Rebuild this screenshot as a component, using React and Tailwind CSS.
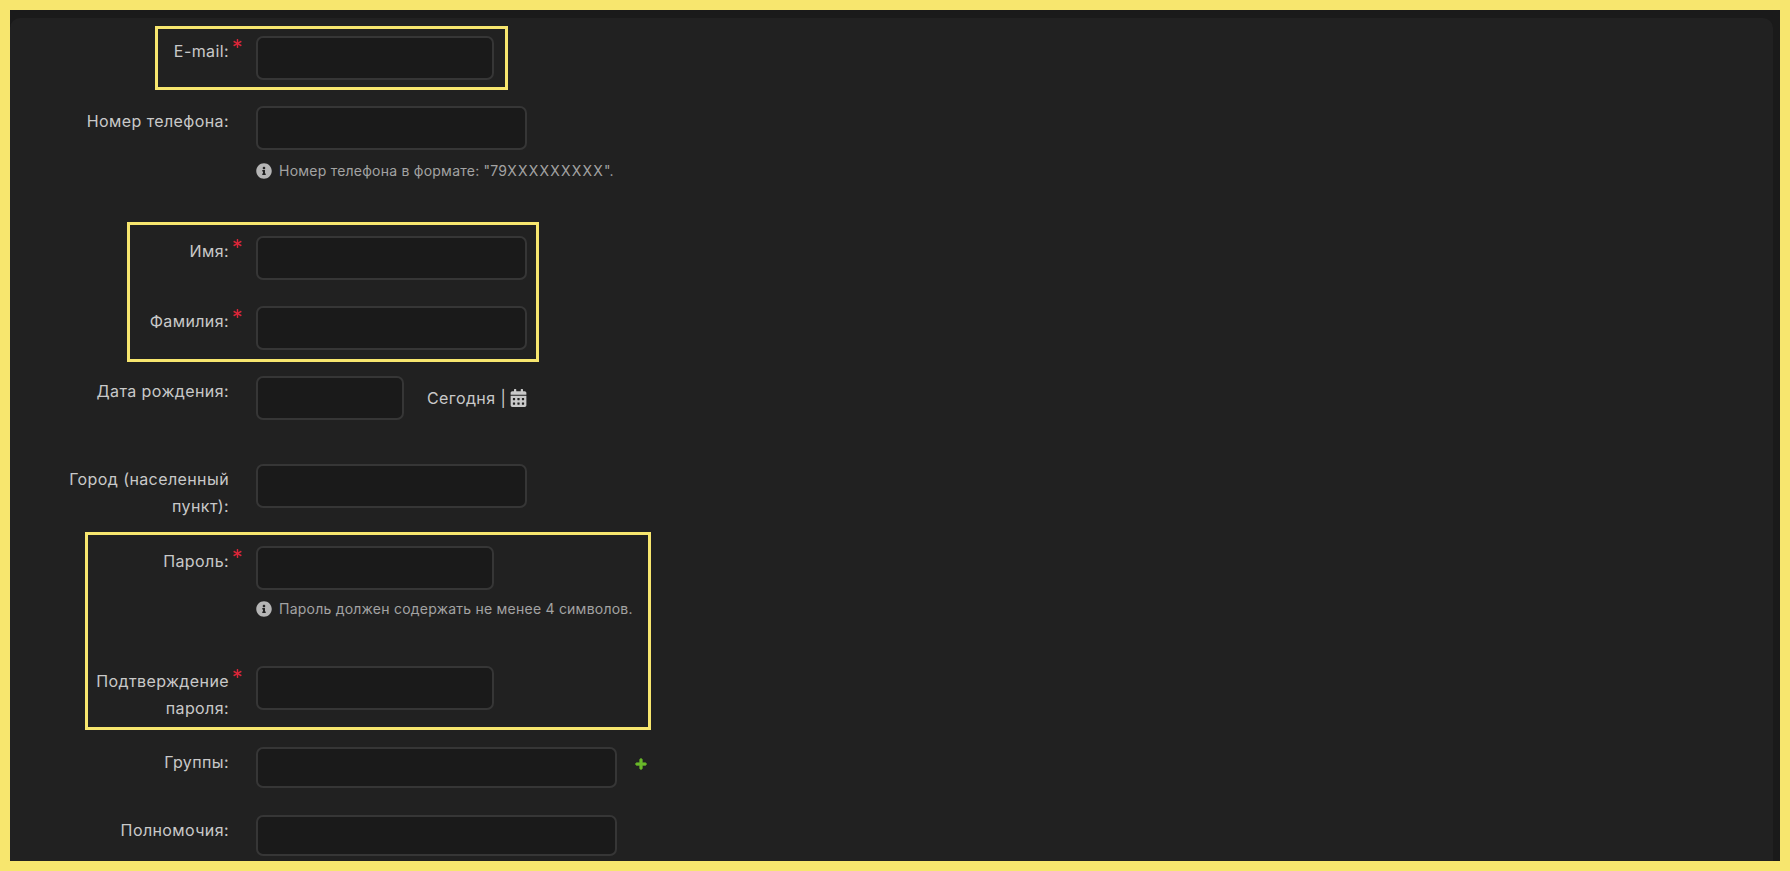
import React from 'react';
import { FaAsterisk, FaCalendarAlt, FaInfoCircle, FaPlus } from 'react-icons/fa';

const Hint = ({ children, className }) => (
  <div className={`flex items-center gap-[7px] text-[14px] leading-[18px] tracking-[0.23px] text-[#a3a3a3] ${className}`}>
    <FaInfoCircle className="w-[16px] h-[16px] text-[#b5b5b5]" />
    <span>{children}</span>
  </div>
);

// label column + field column, same for every row
const Row = ({ label, required, inputClass, after, hint, hintClass, className }) => (
  <div className={`flex items-start ${className}`}>
    <label className="relative w-[170px] pt-[2px] text-right text-[16px] leading-[27px] tracking-[0.4px] text-[#c9c9c9]">
      {label}
      {required && <FaAsterisk className="absolute right-[-13px] top-[3px] w-[9px] h-[9px] text-[#d92638]" />}
    </label>
    <div className="ml-[27px]">
      <div className="flex items-center">
        <input className={`rounded-[7px] border-2 border-[#363636] bg-[#1a1a1a] ${inputClass}`} />
        {after}
      </div>
      {hint && <Hint className={hintClass}>{hint}</Hint>}
    </div>
  </div>
);

export default function App() {
  return (
    <div className="h-[871px] w-[1790px] overflow-hidden border-[10px] border-[#f7e66e] bg-[#1a1a1a] pt-[8px] pr-[7px] font-['Inter',sans-serif]">
      <div className="h-[900px] rounded-[10px] bg-[#212121] pl-[49px] pt-[18px]">
        <div className="relative mb-[26px]">
          <Row label="E-mail:" required inputClass="h-[44px] w-[238px]" />
          <div className="absolute left-[96px] top-[-10px] h-[64px] w-[353px] border-[3px] border-[#f7e66e]" />
        </div>

        <Row
          label="Номер телефона:"
          inputClass="h-[44px] w-[271px]"
          hint={<>Номер телефона в формате: "79<span className="tracking-[1.2px]">XXXXXXXXX</span>".</>}
          hintClass="mt-[12px]"
          className="mb-[56px]"
        />

        <div className="relative mb-[26px]">
          <Row label="Имя:" required inputClass="h-[44px] w-[271px]" className="mb-[26px]" />
          <Row label="Фамилия:" required inputClass="h-[44px] w-[271px]" />
          <div className="absolute left-[68px] top-[-14px] h-[140px] w-[412px] border-[3px] border-[#f7e66e]" />
        </div>

        <Row
          label="Дата рождения:"
          inputClass="h-[44px] w-[148px]"
          className="mb-[44px]"
          after={
            <div className="ml-[23px] flex items-center text-[16px] tracking-[0.4px] text-[#c9c9c9]">
              <span>Сегодня |</span>
              <FaCalendarAlt className="ml-[4px] w-[17px] h-[18px]" />
            </div>
          }
        />

        <Row label="Город (населенный пункт):" inputClass="h-[44px] w-[271px]" className="mb-[26px]" />

        <div className="relative mb-[25px]">
          <Row
            label="Пароль:"
            required
            inputClass="h-[44px] w-[238px]"
            hint="Пароль должен содержать не менее 4 символов."
            hintClass="mt-[10px]"
            className="mb-[48px]"
          />
          <Row label="Подтверждение пароля:" required inputClass="h-[44px] w-[238px]" />
          <div className="absolute left-[26px] top-[-14px] h-[198px] w-[566px] border-[3px] border-[#f7e66e]" />
        </div>

        <Row
          label="Группы:"
          inputClass="h-[41px] w-[361px]"
          className="mb-[27px]"
          after={<FaPlus className="ml-[18px] mb-[8px] w-[12px] h-[12px] stroke-[40px] text-[#6ab82a]" />}
        />

        <Row label="Полномочия:" inputClass="h-[41px] w-[361px]" />
      </div>
    </div>
  );
}
